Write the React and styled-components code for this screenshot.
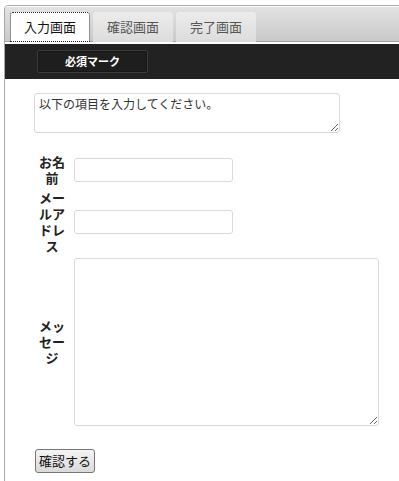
import React from "react";
import styled, { createGlobalStyle } from "styled-components";

const GlobalStyle = createGlobalStyle`
  html, body {
    margin: 0;
    padding: 0;
    background: #fff;
    overflow: hidden;
  }
  body {
    font-family: "Noto Sans CJK JP", "Liberation Sans", sans-serif;
    font-size: 13px;
    color: #222;
  }
`;

const Frame = styled.div`
  margin: 5px -12px 0 4px;
  min-height: 500px;
  border: 1px solid #a9a9a9;
  border-radius: 4px 0 0 0;
  box-sizing: border-box;
  overflow: hidden;
`;

const TabBar = styled.div`
  display: flex;
  align-items: flex-end;
  gap: 3px;
  height: 36px;
  padding: 0 0 0 5px;
  border-top: 1px solid #fff;
  border-bottom: 1px solid #a5a5a5;
  background: linear-gradient(to bottom, #e2e2e2, #c9c9c9);
  box-sizing: border-box;
`;

const Tab = styled.div`
  height: 30px;
  padding: 0 14px;
  display: flex;
  align-items: center;
  justify-content: center;
  box-sizing: border-box;
  border-radius: 3px 3px 0 0;
  font-size: 13px;
  line-height: 16px;
  color: ${(p) => (p.$active ? "#111" : "#555")};
  background: ${(p) =>
    p.$active ? "#fff" : "linear-gradient(to bottom, #ececec, #dcdcdc)"};
  outline: ${(p) => (p.$active ? "1px dotted #222" : "none")};
  outline-offset: -1px;
  margin-bottom: -1px;
`;

const DarkBar = styled.div`
  height: 36px;
  margin-top: 1px;
  border-top: 1px solid #fff;
  background: #222;
  padding: 6px 0 0 32px;
  box-sizing: border-box;
`;

const Badge = styled.div`
  width: 111px;
  height: 23px;
  box-sizing: border-box;
  border: 1px solid #3c3c3c;
  border-radius: 2px;
  box-shadow: inset 0 0 0 1px #161616;
  background: #1e1e1e;
  color: #fff;
  font-size: 11px;
  font-weight: bold;
  line-height: 21px;
  text-align: center;
`;

const Content = styled.div`
  padding: 14px 0 0 29px;
`;

const Area = styled.textarea`
  display: block;
  width: ${(p) => p.$w}px;
  height: ${(p) => p.$h}px;
  box-sizing: border-box;
  border: 1px solid #d9d9d9;
  border-radius: 3px;
  padding: 2px 4px;
  font-family: "Noto Sans CJK JP", "Liberation Sans", sans-serif;
  font-size: 12px;
  line-height: 16px;
  color: #333;
  resize: both;
  outline: none;
`;

const Form = styled.div`
  display: grid;
  grid-template-columns: 30px auto;
  column-gap: 7px;
  row-gap: 4px;
  margin: 21px 0 0 3px;
  align-items: center;
  justify-items: start;
`;

const Label = styled.div`
  justify-self: stretch;
  font-size: 13px;
  font-weight: bold;
  line-height: 16px;
  text-align: center;
  color: #222;
  word-break: break-all;
`;

const Field = styled.input`
  width: 159px;
  height: 24px;
  box-sizing: border-box;
  border: 1px solid #d9d9d9;
  border-radius: 3px;
  padding: 2px 4px;
  font-size: 13px;
  outline: none;
`;

const Submit = styled.button`
  margin: 23px 0 0 1px;
  height: 24px;
  padding: 0 3px;
  border: 1px solid #767676;
  border-radius: 3px;
  background: linear-gradient(to bottom, #f4f4f4, #dadada);
  font-family: "Noto Sans CJK JP", "Liberation Sans", sans-serif;
  font-size: 13px;
  line-height: 20px;
  color: #111;
`;

export default function App() {
  return (
    <>
      <GlobalStyle />
      <Frame>
        <TabBar>
          <Tab $active>入力画面</Tab>
          <Tab>確認画面</Tab>
          <Tab>完了画面</Tab>
        </TabBar>
        <DarkBar>
          <Badge>必須マーク</Badge>
        </DarkBar>
        <Content>
          <Area $w={306} $h={40} defaultValue="以下の項目を入力してください。" />
          <Form>
            <Label>お名前</Label>
            <Field type="text" />
            <Label>メールアドレス</Label>
            <Field type="text" />
            <Label>メッセージ</Label>
            <Area $w={305} $h={168} />
          </Form>
          <Submit>確認する</Submit>
        </Content>
      </Frame>
    </>
  );
}
